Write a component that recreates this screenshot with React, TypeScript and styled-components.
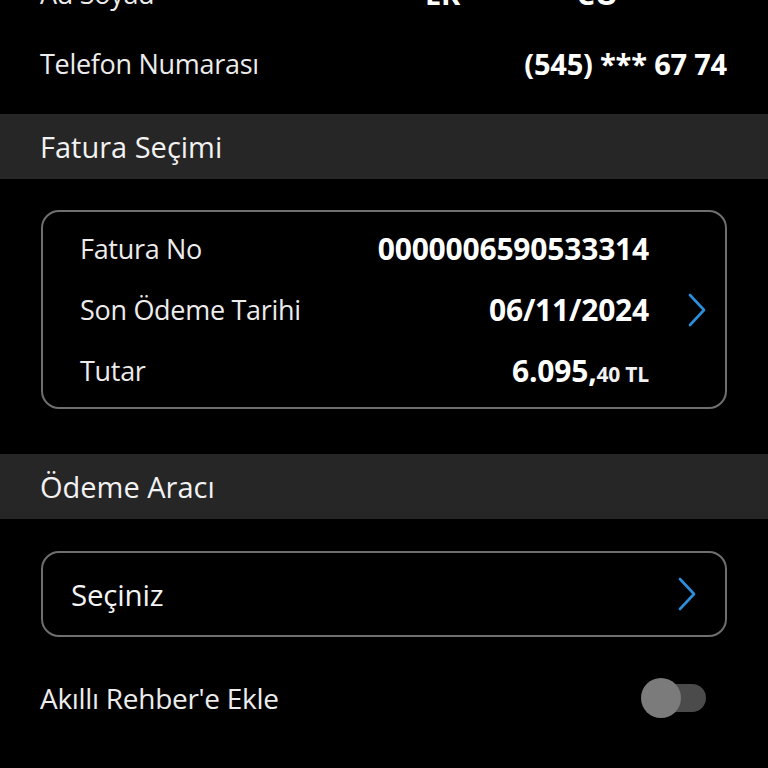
import React from "react";
import styled, { createGlobalStyle } from "styled-components";

const GlobalStyle = createGlobalStyle`
  html, body {
    margin: 0;
    padding: 0;
    background: #000;
    overflow: hidden;
  }
  body {
    font-family: "Open Sans", "Noto Sans", sans-serif;
    color: #fff;
  }
`;

const Screen = styled.div`
  width: 768px;
  height: 768px;
  overflow: hidden;
  background: #000;
`;

// page is scrolled a bit, so the first row is cut at the top
const Scroll = styled.div`
  margin-top: -33px;
`;

const InfoRow = styled.div<{ $lift?: number }>`
  height: 64px;
  box-sizing: border-box;
  padding: 0 41px ${(p) => p.$lift ?? 0}px 40px;
  display: flex;
  align-items: center;
  justify-content: space-between;
`;

const Label = styled.span`
  font-size: 27px;
  font-weight: 400;
  color: #ececec;
  letter-spacing: -0.3px;
`;

const Value = styled.span<{ $size?: number }>`
  font-size: ${(p) => p.$size ?? 30}px;
  font-weight: 700;
  color: #fff;
  letter-spacing: -0.2px;
`;

const SectionHeader = styled.div<{ $top: number }>`
  margin-top: ${(p) => p.$top}px;
  height: 65px;
  background: #262626;
  display: flex;
  align-items: center;
  padding-left: 40px;
  font-size: 29px;
  color: #f2f2f2;
`;

const Card = styled.div<{ $top: number }>`
  margin: ${(p) => p.$top}px 41px 0 41px;
  border: 2px solid #6f6f6f;
  border-radius: 18px;
  display: flex;
  align-items: center;
`;

const CardRows = styled.div`
  flex: 1;
  padding: 6px 0 6px 37px;
  display: flex;
  flex-direction: column;
`;

const CardRow = styled.div`
  height: 61px;
  display: flex;
  align-items: center;
  justify-content: space-between;
`;

const ChevronBox = styled.div<{ $width: number; $indent?: number }>`
  width: ${(p) => p.$width}px;
  padding-left: ${(p) => p.$indent ?? 0}px;
  box-sizing: border-box;
  display: flex;
  justify-content: flex-start;
  align-items: center;
`;

const Small = styled.span`
  font-size: 21px;
  font-weight: 700;
  color: #f0f0f0;
`;

const SelectBox = styled(Card)`
  height: 82px;
  padding-left: 28px;
  justify-content: space-between;
`;

const SelectText = styled.span`
  font-size: 29.5px;
  font-weight: 500;
  color: #f4f4f4;
  letter-spacing: -0.2px;
`;

const ToggleRow = styled(InfoRow)`
  margin-top: 30px;
  height: 62px;
  padding-right: 62px;
`;

const ToggleLabel = styled(Label)`
  font-size: 28px;
`;

const Toggle = styled.div`
  position: relative;
  width: 66px;
  height: 40px;
  display: flex;
  align-items: center;
  justify-content: flex-end;
`;

const Track = styled.div`
  width: 48px;
  height: 28px;
  border-radius: 14px;
  background: #4b4b4b;
`;

const Knob = styled.div`
  position: absolute;
  left: 1px;
  top: 0;
  width: 40px;
  height: 40px;
  border-radius: 50%;
  background: #7b7b7b;
`;

const Chevron = () => (
  <svg width="20" height="34" viewBox="0 0 20 34" fill="none">
    <path
      d="M3 2 L17 17 L3 32"
      stroke="#2b8fdc"
      strokeWidth="2.6"
      strokeLinecap="round"
      strokeLinejoin="round"
    />
  </svg>
);

export default function App() {
  return (
    <Screen>
      <GlobalStyle />
      <Scroll>
        <InfoRow $lift={12}>
          <Label>Ad Soyad</Label>
          <Value $size={29}>EK******* CÖ*******</Value>
        </InfoRow>
        <InfoRow>
          <Label>Telefon Numarası</Label>
          <Value $size={29}>(545) *** 67 74</Value>
        </InfoRow>

        <SectionHeader $top={19}>Fatura Seçimi</SectionHeader>

        <Card $top={31}>
          <CardRows>
            <CardRow>
              <Label>Fatura No</Label>
              <Value>0000006590533314</Value>
            </CardRow>
            <CardRow>
              <Label>Son Ödeme Tarihi</Label>
              <Value>06/11/2024</Value>
            </CardRow>
            <CardRow>
              <Label>Tutar</Label>
              <Value>
                6.095,<Small>40 TL</Small>
              </Value>
            </CardRow>
          </CardRows>
          <ChevronBox $width={76} $indent={38}>
            <Chevron />
          </ChevronBox>
        </Card>

        <SectionHeader $top={45}>Ödeme Aracı</SectionHeader>

        <SelectBox $top={32}>
          <SelectText>Seçiniz</SelectText>
          <ChevronBox $width={48}>
            <Chevron />
          </ChevronBox>
        </SelectBox>

        <ToggleRow>
          <ToggleLabel>Akıllı Rehber'e Ekle</ToggleLabel>
          <Toggle>
            <Track />
            <Knob />
          </Toggle>
        </ToggleRow>
      </Scroll>
    </Screen>
  );
}
